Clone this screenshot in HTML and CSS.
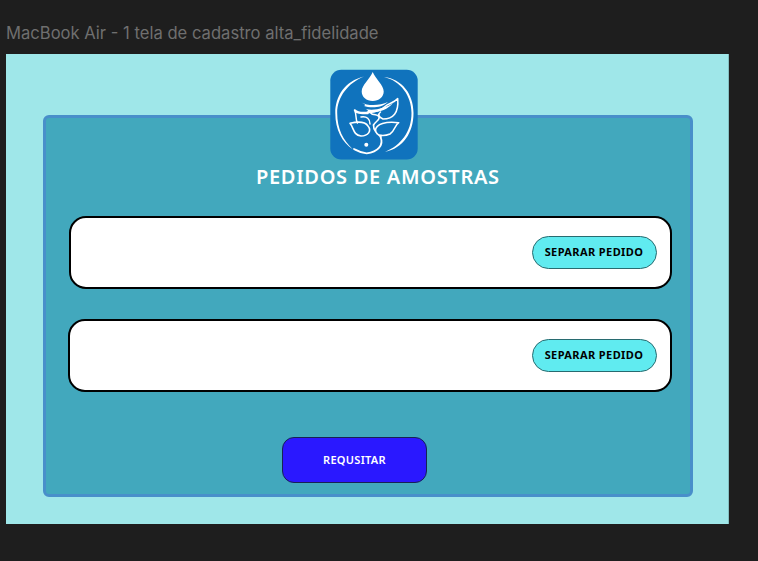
FILE: index.html
```
<!DOCTYPE html>
<html lang="pt-BR">
<head>
<meta charset="utf-8">
<title>Pedidos de amostras</title>
<link rel="stylesheet" href="styles.css">
</head>
<body>
<div class="frame-label">MacBook Air - 1 tela de cadastro alta_fidelidade</div>
<main class="frame">
  <section class="panel">
    <svg class="logo" viewBox="0 0 88 91" fill="none" stroke="#fff" stroke-linecap="round" stroke-linejoin="round">
      <rect x=".3" y=".8" width="87.400" height="89.700" rx="11" fill="#1073bd" stroke="none"/>
      <g fill="#fff" stroke="none">
        <path d="M42.700 3C40 10 31.700 16 31.700 22.500C31.700 28 36.500 32 42.700 32S53.700 28 53.700 22.500C53.700 16 45.500 10 42.700 3Z"/>
        <path d="M34 7.500C15 12 5.300 27 5.300 44C5.300 61 12 73 23 80.500C13 71 7.200 60 7.200 44C7.200 28 18 14 34 7.500Z"/>
        <path d="M54 8C71 12 81.500 27 81.500 44C81.500 63 71 76 55 83C73 79 83.500 64 83.500 44C83.500 25 72 10 54 8Z"/>
        <path d="M31.500 33.500C37 37 50 37 58 33C51 39.500 40 39 34 37C37 36 34 35 31.500 33.500Z"/>
        <path d="M36 40C44 42 56 39 63 34C57 41.500 47 44.500 36 43C39 42 38 41 36 40Z"/>
        <circle cx="36.300" cy="75.700" r="2"/>
      </g>
      <path stroke-width="1.500" d="M40 43.500C47 43 51 41 55 37.500C59 34 64 34 67.700 29.500C69 44 63 50 53 50C48 48 48 45 50.500 43M40 43.500C44 48 47 43.500 49 48C50 51 46 52 43.500 56M38 44.500C33 44 28 46 24.500 41C27 45 25 50 27.500 54M25 41C29 45 35 43 39 43.500M31 48C37 47 40 50 40 55"/>
      <path stroke-width="1.600" d="M20 54.300C30 52 36 54 38 57C42 62 38 67 31 67C23 66 24 59 20 54.300ZM68.700 53.700C56 52 46 55 45.500 61C46 68 55 67 60 65C65 62 64 57 68.700 53.700ZM43.500 56C43 61 48 66 51 68"/>
      <path stroke-width="1.800" d="M50.500 68C54 76 48 83 36.700 84.300C30 84 26 81 24 80"/>
    </svg>
    <h1 class="title">PEDIDOS DE AMOSTRAS</h1>
    <div class="orders">
      <article class="order"><button class="pick"><span>SEPARAR PEDIDO</span></button></article>
      <article class="order order-wide"><button class="pick"><span>SEPARAR PEDIDO</span></button></article>
    </div>
    <button class="request"><span>REQUSITAR</span></button>
  </section>
</main>
</body>
</html>
```
FILE: styles.css
```
* { box-sizing: border-box; }
body {
  margin: 0;
  height: 561px;
  padding: 22px 29px 0 6px;
  overflow: hidden;
  background: #1e1e1e;
  font-family: "Noto Sans", sans-serif;
}
.frame-label {
  height: 32px;
  padding-top: 1px;
  font: 400 16.600px/21px Inter, sans-serif;
  color: #6f6f6f;
  white-space: nowrap;
}
.frame {
  height: 470px;
  padding: 61px 35.5px 0 37px;
  background: #9fe7e9;
  border-right: 1px solid #83bfc1;
}
.panel {
  height: 382px;
  border: 3px solid #488fca;
  border-radius: 6px;
  background: #42a8bd;
}
.logo {
  display: block;
  width: 88px;
  height: 91px;
  margin: -49px 0 0 284px;
}
.title {
  margin: 4px 0 0 210px;
  font-size: 20px;
  font-weight: 600;
  line-height: 26px;
  letter-spacing: .7px;
  color: #fff;
  white-space: nowrap;
}
.orders {
  display: flex;
  flex-direction: column;
  gap: 30px;
  margin: 26px 18px 0 23px;
}
.order {
  display: flex;
  align-items: center;
  justify-content: flex-end;
  height: 73px;
  padding-right: 13px;
  border: 2px solid #000;
  border-radius: 17px;
  background: #fff;
}
.order-wide { margin-left: -1px; }
button {
  padding: 0;
  font-family: inherit;
  white-space: nowrap;
}
button span {
  display: block;
  margin-top: -2px;
}
.pick {
  width: 125px;
  height: 33px;
  border: 1px solid #286b70;
  border-radius: 17px;
  background: #60ebf0;
  color: #000;
  font-size: 11px;
  font-weight: 700;
  letter-spacing: .4px;
}
.request {
  display: block;
  width: 145px;
  height: 46px;
  margin: 45px 0 0 236px;
  border: 1px solid #182254;
  border-radius: 12px;
  background: #2a18ff;
  color: #fff;
  font-size: 11px;
  font-weight: 600;
  letter-spacing: .3px;
}
```
